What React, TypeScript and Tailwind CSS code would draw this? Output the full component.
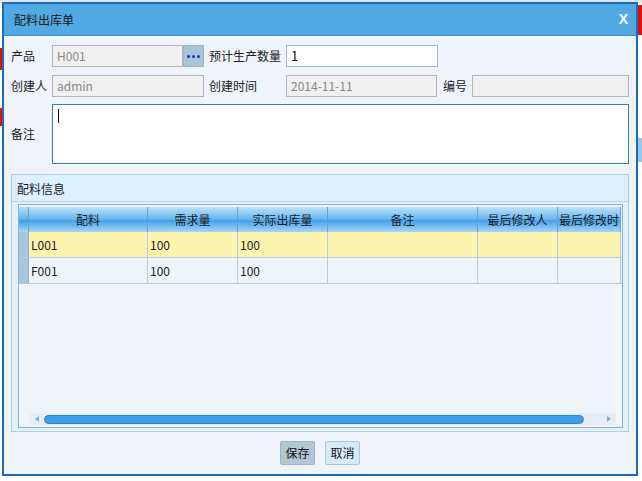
import React from "react";

const font = { fontFamily: '"Noto Sans CJK SC", "Noto Sans", sans-serif' };

function Label({ w, children }: { w: string; children: React.ReactNode }) {
  return <div className={`${w} shrink-0 text-[12px] text-[#222] leading-[22px]`}>{children}</div>;
}

export default function App() {
  const cols = [
    { name: "配料", w: "w-[119px]" },
    { name: "需求量", w: "w-[90px]" },
    { name: "实际出库量", w: "w-[90px]" },
    { name: "备注", w: "w-[150px]" },
    { name: "最后修改人", w: "w-[80px]" },
    { name: "最后修改时", w: "w-[63px]" },
  ];
  const rows = [
    ["L001", "100", "100", "", "", ""],
    ["F001", "100", "100", "", "", ""],
  ];
  return (
    <div className="relative w-[642px] h-[481px] overflow-hidden bg-white" style={font}>
      {/* background page hints */}
      <div className="absolute left-0 top-[48px] w-[3px] h-[22px] bg-[#e01010]" />
      <div className="absolute left-0 top-[108px] w-[3px] h-[18px] bg-[#e01010]" />
      <div className="absolute right-0 top-[5px] w-[4px] h-[30px] bg-[#e01010]" />
      <div className="absolute right-0 top-[138px] w-[4px] h-[24px] bg-[#9cc7ea]" />
      <div className="absolute left-0 top-0 w-full h-[3px] bg-[#dbe8f4]" />

      {/* dialog */}
      <div className="absolute left-[2px] top-[2px] w-[636px] h-[474px] border-2 border-[#1b6cb3] bg-[#eff3fb] flex flex-col">
        <div className="h-[32px] bg-[#52a8e2] border-b border-[#3a8fcf] flex items-center justify-between pl-[10px] pr-[8px] shrink-0">
          <span className="text-[12px] text-[#1a1a1a]">配料出库单</span>
          <span className="text-[14px] font-bold text-white" style={{ fontFamily: '"Liberation Sans", sans-serif' }}>X</span>
        </div>

        <div className="flex flex-col pl-[7px] pr-[7px] pt-[9px]">
          {/* row 1 */}
          <div className="flex items-center h-[22px]">
            <Label w="w-[41px]">产品</Label>
            <div className="w-[131px] h-[22px] border border-[#b5b5b5] bg-[#f0f0f0] text-[12px] text-[#888] leading-[20px] pl-[4px]">H001</div>
            <div className="w-[21px] h-[22px] bg-[#a9c3d8] border border-[#9ab4c8] flex items-center justify-center gap-[2px]">
              <span className="w-[3px] h-[3px] rounded-full bg-[#1733c8]" />
              <span className="w-[3px] h-[3px] rounded-full bg-[#1733c8]" />
              <span className="w-[3px] h-[3px] rounded-full bg-[#1733c8]" />
            </div>
            <div className="w-[5px]" />
            <Label w="w-[77px]">预计生产数量</Label>
            <div className="w-[152px] h-[22px] border border-[#9fb8cf] bg-white text-[13px] text-[#111] leading-[20px] pl-[4px]">1</div>
          </div>
          {/* row 2 */}
          <div className="flex items-center h-[22px] mt-[8px]">
            <Label w="w-[41px]">创建人</Label>
            <div className="w-[152px] h-[22px] border border-[#b5b5b5] bg-[#f0f0f0] text-[12px] text-[#888] leading-[20px] pl-[4px]">admin</div>
            <div className="w-[5px]" />
            <Label w="w-[77px]">创建时间</Label>
            <div className="w-[151px] h-[22px] border border-[#b5b5b5] bg-[#f0f0f0] text-[12px] text-[#888] leading-[20px] pl-[4px]">2014-11-11</div>
            <div className="w-[6px]" />
            <Label w="w-[29px]">编号</Label>
            <div className="w-[157px] h-[22px] border border-[#b5b5b5] bg-[#f0f0f0]" />
          </div>
          {/* row 3 */}
          <div className="flex items-center h-[60px] mt-[7px]">
            <Label w="w-[41px]">备注</Label>
            <div className="w-[577px] h-[60px] border border-[#3b7fa8] bg-white relative">
              <div className="absolute left-[5px] top-[4px] w-px h-[14px] bg-black" />
            </div>
          </div>

          {/* panel */}
          <div className="mt-[10px] w-[618px] h-[258px] border border-[#a9d0ea] bg-[#e4f1fb] flex flex-col">
            <div className="h-[27px] bg-[#dcefff] border-b border-[#b7d7ee] text-[12px] text-[#1a1a1a] leading-[27px] pl-[5px] shrink-0">配料信息</div>
            <div className="ml-[6px] mr-[5px] mt-[2px] h-[224px] border border-[#86b2d2] bg-[#eff4fb] flex flex-col pt-[2px]">
              {/* header */}
              <div className="flex h-[25px] shrink-0">
                <div
                  className="w-[10px] border-r border-[#6f9ec4]"
                  style={{ background: "linear-gradient(#b9e0fa, #5eb2ee 50%, #3f9fe8 55%, #a9d6f6)" }}
                />
                {cols.map((c) => (
                  <div
                    key={c.name}
                    className={`${c.w} shrink-0 border-r border-[#6f9ec4] text-center text-[12px] text-[#1a1a1a] leading-[25px]`}
                    style={{ background: "linear-gradient(#bde2fa, #68b8f0 48%, #44a2ea 55%, #a9d6f6)" }}
                  >
                    {c.name}
                  </div>
                ))}
              </div>
              {rows.map((r, i) => (
                <div key={i} className="flex h-[26px] shrink-0 border-b border-[#b4cde0]">
                  <div className="w-[10px] bg-[#a9c6dd] border-r border-[#8fb0c9]" />
                  {r.map((v, j) => (
                    <div
                      key={j}
                      className={`${cols[j].w} shrink-0 border-r border-[#b4cde0] text-[12px] text-[#1a1a1a] leading-[26px] pl-[2px] ${
                        i === 0 ? "bg-[#fcf4ae]" : "bg-[#eef4fb]"
                      }`}
                    >
                      {v}
                    </div>
                  ))}
                </div>
              ))}
              <div className="flex-1" />
              {/* scrollbar */}
              <div className="h-[12px] mb-[2px] ml-[11px] mr-[6px] bg-[#e6edf4] flex items-center">
                <svg width="14" height="12" viewBox="0 0 14 12" className="shrink-0">
                  <path d="M9 3 L5 6 L9 9 Z" fill="#7fb1d6" />
                </svg>
                <div className="flex-1 h-[9px] rounded-full bg-[#3f9ee8] border border-[#2d86cf]" />
                <div className="w-[18px]" />
                <svg width="14" height="12" viewBox="0 0 14 12" className="shrink-0">
                  <path d="M5 3 L9 6 L5 9 Z" fill="#7fb1d6" />
                </svg>
              </div>
            </div>
          </div>

          {/* buttons */}
          <div className="flex justify-center gap-[10px] mt-[9px]">
            <div className="w-[35px] h-[24px] bg-[#b3c6d3] border border-[#9fb6c7] rounded-[2px] text-[12px] text-[#111] leading-[22px] text-center">保存</div>
            <div className="w-[35px] h-[24px] bg-[#d6eaf8] border border-[#a9c9e0] rounded-[2px] text-[12px] text-[#111] leading-[22px] text-center">取消</div>
          </div>
        </div>
      </div>
    </div>
  );
}
